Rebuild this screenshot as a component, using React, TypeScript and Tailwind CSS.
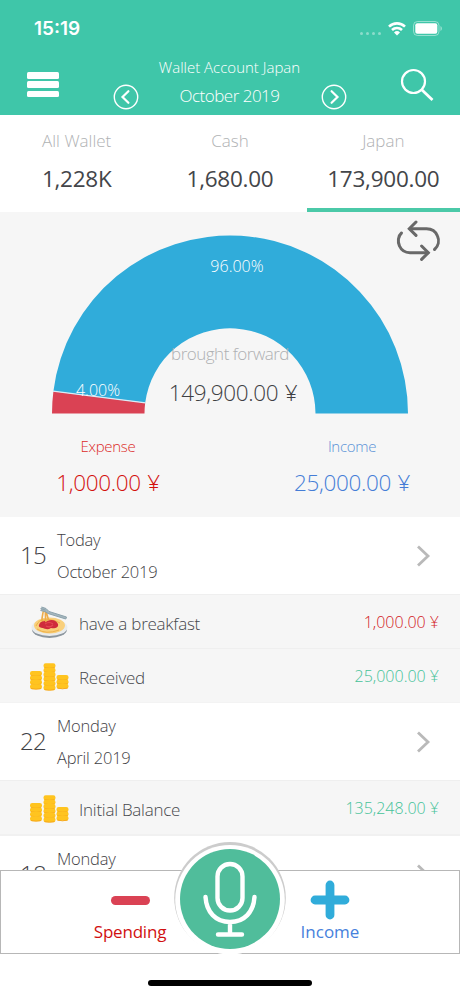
import type { ReactNode } from "react";

function StatusBar() {
  return (
    <div className="flex h-[57px] items-center justify-between pl-[34px] pr-[17px]">
      <span className="font-['Inter'] text-[19px] font-semibold leading-none">15:19</span>
      <div className="flex items-center">
        <div className="mt-[10px] flex gap-[3px] opacity-40">
          <i className="size-[3px] rounded-full bg-white" />
          <i className="size-[3px] rounded-full bg-white" />
          <i className="size-[3px] rounded-full bg-white" />
          <i className="size-[3px] rounded-full bg-white" />
        </div>
        <svg className="ml-[7px]" width="18" height="14" viewBox="0 0 18 14" fill="none" stroke="white" strokeWidth="2.6">
          <path d="M1 4.6a11.5 11.5 0 0 1 16 0" />
          <path d="M4 8a7.2 7.2 0 0 1 10 0" />
          <path d="M9 13.4 6 10.4a4.3 4.3 0 0 1 6 0Z" fill="white" stroke="none" />
        </svg>
        <svg className="ml-[7px]" width="30" height="15" viewBox="0 0 30 15">
          <rect x=".5" y=".5" width="25.500" height="14" rx="4" fill="none" stroke="white" strokeOpacity=".45" />
          <rect x="2.300" y="2.300" width="22" height="10.400" rx="2" fill="white" />
          <path d="M27.500 5v5c1.800-.8 1.800-4.200 0-5Z" fill="white" opacity=".5" />
        </svg>
      </div>
    </div>
  );
}

function CircleArrow({ right = false }: { right?: boolean }) {
  return (
    <svg width="26" height="26" viewBox="0 0 26 26" fill="none" stroke="white" strokeLinecap="round">
      <circle cx="13" cy="13" r="11.700" strokeWidth="1.400" />
      <path d={right ? "m10.600 7.200 5.900 5.800-5.900 5.800" : "m15.400 7.200-5.900 5.800 5.900 5.800"} strokeWidth="2.200" />
    </svg>
  );
}

function Header() {
  return (
    <header className="h-[115px] shrink-0 bg-[#3fc6a9] text-white">
      <StatusBar />
      <div className="flex h-[58px] justify-between pl-[27px] pr-[26px]">
        <div className="mt-[15px] flex h-[25px] w-8 flex-col justify-between">
          <i className="h-[6.500px] rounded-[1.500px] bg-white" />
          <i className="h-[6.500px] rounded-[1.500px] bg-white" />
          <i className="h-[6.500px] rounded-[1.500px] bg-white" />
        </div>
        <div className="flex w-[234px] flex-col items-center">
          <div className="text-[15px] font-light leading-5 whitespace-nowrap">Wallet Account Japan</div>
          <div className="mt-[6px] flex h-[28px] w-full items-center justify-between">
            <CircleArrow />
            <span className="-mt-[2px] text-[17px] font-light leading-6 tracking-[-0.5px]">October 2019</span>
            <CircleArrow right />
          </div>
        </div>
        <svg className="mt-[10px]" width="34" height="36" viewBox="0 0 34 36" fill="none" stroke="white">
          <circle cx="13.500" cy="14.500" r="11.500" strokeWidth="2.200" />
          <path d="m21.500 22.500 11 10.500" strokeWidth="2.800" />
        </svg>
      </div>
    </header>
  );
}

function WalletTab({ label, value, active = false }: { label: string; value: string; active?: boolean }) {
  return (
    <div className={active ? "h-[97px] border-b-[4px] border-[#4bc9a8]" : "h-[97px]"}>
      <div className="pt-[14px] text-[17px] font-light leading-6 text-[#b0b2b4]">{label}</div>
      <div className="pt-[12px] text-[22.500px] leading-7 tracking-[-0.250px] text-[#434549]">{value}</div>
    </div>
  );
}

function Chart() {
  return (
    <div className="relative h-[202px]">
      <svg className="block" width="460" height="202" viewBox="0 212 460 202">
        <path d="M53.400 391.200A178 178 0 0 1 408 413.500H315.500A85.500 85.500 0 0 0 145.200 402.800Z" fill="#30acda" />
        <path d="M52 413.500A178 178 0 0 1 53.400 391.200L145.200 402.800A85.500 85.500 0 0 0 144.500 413.500Z" fill="#da4254" />
        <path d="m53 391.200 92.500 11.600" stroke="#d9eef8" strokeWidth="1.200" />
        <g fill="none" stroke="#696969" strokeWidth="3" strokeLinecap="round">
          <path d="M401.500 233c-3.500 3-4 9-2 13 2 4.500 6 6.700 10.500 6.700H428M434.500 249.500c4-3.500 5-9 3-13.500-2-5-6.500-7.300-11-7.300H410" />
          <path d="m416 222-6.700 6.700 6.700 6.700M421.600 246l6.700 6.700-6.700 6.700" />
        </g>
      </svg>
      <span className="absolute left-[207px] top-[44px] w-[60px] text-center text-[16px] font-light leading-5 text-white">96.00%</span>
      <span className="absolute left-[73px] top-[168px] w-[50px] text-center text-[16px] font-light leading-5 text-white">4.00%</span>
      <span className="absolute left-[160px] top-[130px] w-[140px] text-center text-[17px] font-light leading-6 tracking-[-0.500px] text-[#aeb0b2] whitespace-nowrap">brought forward</span>
      <span className="absolute left-[158px] top-[167px] w-[150px] text-center text-[22.500px] font-light leading-7 tracking-[-0.350px] text-[#3e4043] [word-spacing:1px] whitespace-nowrap">149,900.00 ¥</span>
    </div>
  );
}

function Summary() {
  return (
    <section className="h-[305px] shrink-0 bg-[#f6f6f6]">
      <Chart />
      <div className="flex justify-between pl-[38px] pr-[38px] text-center font-light">
        <div className="w-[140px] text-[#dc2a28]">
          <div className="pt-[22px] text-[15px] leading-5 tracking-[-0.3px]">Expense</div>
          <div className="pt-[13px] text-[22.500px] leading-7 tracking-[-0.350px] text-[#d3110e] [word-spacing:1px]">1,000.00 ¥</div>
        </div>
        <div className="w-[140px] text-[#5a92d6]">
          <div className="pt-[22px] text-[15px] leading-5 tracking-[-0.3px]">Income</div>
          <div className="pt-[13px] text-[22.500px] leading-7 tracking-[-0.350px] text-[#457dd6] [word-spacing:1px]">25,000.00 ¥</div>
        </div>
      </div>
    </section>
  );
}

function DateRow({ day, name, month }: { day: string; name: string; month: string }) {
  return (
    <div className="flex h-[77px] shrink-0 items-center bg-white text-[#3f4145]">
      <span className="-mt-[2px] w-[57px] pl-[20px] text-[24px] font-light leading-8 tracking-[-0.800px]">{day}</span>
      <div className="flex-1 text-[16.500px] font-light leading-8 tracking-[-0.200px]">
        <div>{name}</div>
        <div>{month}</div>
      </div>
      <svg className="mr-[29px]" width="16" height="22" viewBox="0 0 16 22" fill="none" stroke="#b9b9b9" strokeWidth="2.800">
        <path d="m3 1.500 10 9.500-10 9.500" />
      </svg>
    </div>
  );
}

function Stack({ x, top, count }: { x: number; top: number; count: number }) {
  return (
    <g>
      {Array.from({ length: count }, (_, i) => (
        <g key={i}>
          <rect x={x} y={top + i * 4.4} width="12" height="5" rx="2.200" fill="#ffc41f" />
          <path d={`M${x + 1} ${top + i * 4.4 + 4.3}q5 1.400 10 0`} fill="none" stroke="#f5a51b" strokeWidth=".9" />
        </g>
      ))}
    </g>
  );
}

function Coins() {
  return (
    <svg className="mt-[2px]" width="40" height="30" viewBox="0 0 40 30">
      <Stack x={1} top={9} count={4} />
      <Stack x={14.5} top={1.3} count={6} />
      <Stack x={27.5} top={13} count={3} />
    </svg>
  );
}

function Pasta() {
  return (
    <svg className="mr-px ml-[2px]" width="37" height="34" viewBox="0 0 37 34">
      <ellipse cx="18.500" cy="24.500" rx="17.500" ry="8.500" fill="#8c969e" />
      <ellipse cx="18.500" cy="22.500" rx="18" ry="8.500" fill="#e8ebed" />
      <ellipse cx="18.500" cy="20.500" rx="15.500" ry="8" fill="#f9d07c" />
      <path d="M5 21q3-7 9-6m-8 9q9 6 22 1M9 18q8-7 20 0" fill="none" stroke="#eeb04a" strokeWidth="1" />
      <path d="M8 20c1-4 5-4 8-4 5-2 9-1 11 3 1 4-4 5-7 4-3 2-6 1-8 0-2 0-5-1-4-3Z" fill="#cf2b3c" />
      <path d="M14 19q4-3 8 0m-7 2q4 2 7-1" fill="none" stroke="#e34853" strokeWidth="1.200" />
      <path d="M12.500 5c-.5 4-2 8-1.500 11m3-11c1 5 0 8 1 12m0-11 2.500 9" stroke="#edac4a" strokeWidth="1.600" fill="none" />
      <path d="M10.500 2 15 3.500l3 3L35.500 12l-.7 2L17 8.500l-3-2-4.500-1M9.500 3.500l5 1.500" stroke="#8ca2ac" strokeWidth="1" fill="#a6b7be" />
    </svg>
  );
}

function Entry({ icon, title, amount, expense = false }: { icon: ReactNode; title: string; amount: string; expense?: boolean }) {
  return (
    <div className="flex h-[54px] shrink-0 items-center border-t border-[#efefef] bg-[#f6f6f6] pl-[29px] pr-[21px] font-light">
      {icon}
      <span className="ml-[10px] mt-[4px] flex-1 text-[17px] leading-6 tracking-[-0.250px] text-[#46484c]">{title}</span>
      <span className={expense ? "text-[16px] text-[#d3211e]" : "text-[16px] text-[#45c299]"}>{amount}</span>
    </div>
  );
}

function BottomBar() {
  return (
    <footer className="absolute left-0 top-[870px] h-[126px] w-[460px] bg-white">
      <div className="flex h-[84px] justify-between border border-[#b7b7b7] px-[79px]">
        <div className="flex w-[100px] flex-col items-center text-[#d11010]">
          <i className="mt-[25px] h-[9px] w-[39px] rounded-full bg-[#da4254]" />
          <span className="mt-[15px] text-[17px] leading-6 tracking-[-0.2px]">Spending</span>
        </div>
        <div className="flex w-[100px] flex-col items-center text-[#4681dc]">
          <svg className="mt-[9px]" width="40" height="40" viewBox="0 0 40 40" stroke="#30acda" strokeWidth="8.800" strokeLinecap="round">
            <path d="M5 20h30M20 5v30" />
          </svg>
          <span className="text-[17px] leading-6">Income</span>
        </div>
      </div>
      <svg className="absolute left-[173px] top-[-30px]" width="114" height="117" viewBox="173 840 114 117">
        <circle cx="230" cy="897.800" r="55.800" fill="#cccccc" />
        <circle cx="230" cy="899.700" r="54.800" fill="white" />
        <circle cx="230" cy="899" r="50" fill="#50bd9b" />
        <g fill="none" stroke="white" strokeWidth="4.400" strokeLinecap="round">
          <rect x="217.500" y="864" width="25" height="46.500" rx="12.500" />
          <path d="M205.500 897c1 15 10 25 24.500 25s23.500-10 24.500-25M230 922v12M218 934.500h24" />
        </g>
      </svg>
      <div className="mx-auto mt-[26px] h-[6px] w-[164px] rounded-full bg-black" />
    </footer>
  );
}

export default function App() {
  return (
    <main className="relative flex h-[996px] w-[460px] flex-col overflow-hidden bg-white font-['Open_Sans','Noto_Sans',sans-serif]">
      <Header />
      <nav className="grid h-[97px] shrink-0 grid-cols-3 text-center">
        <WalletTab label="All Wallet" value="1,228K" />
        <WalletTab label="Cash" value="1,680.00" />
        <WalletTab label="Japan" value="173,900.00" active />
      </nav>
      <Summary />
      <DateRow day="15" name="Today" month="October 2019" />
      <Entry icon={<Pasta />} title="have a breakfast" amount="1,000.00 ¥" expense />
      <Entry icon={<Coins />} title="Received" amount="25,000.00 ¥" />
      <div className="h-px shrink-0 bg-[#f3f3f3]" />
      <DateRow day="22" name="Monday" month="April 2019" />
      <Entry icon={<Coins />} title="Initial Balance" amount="135,248.00 ¥" />
      <div className="h-[2px] shrink-0 bg-[#f1f1f1]" />
      <DateRow day="18" name="Monday" month="April 2019" />
      <BottomBar />
    </main>
  );
}
